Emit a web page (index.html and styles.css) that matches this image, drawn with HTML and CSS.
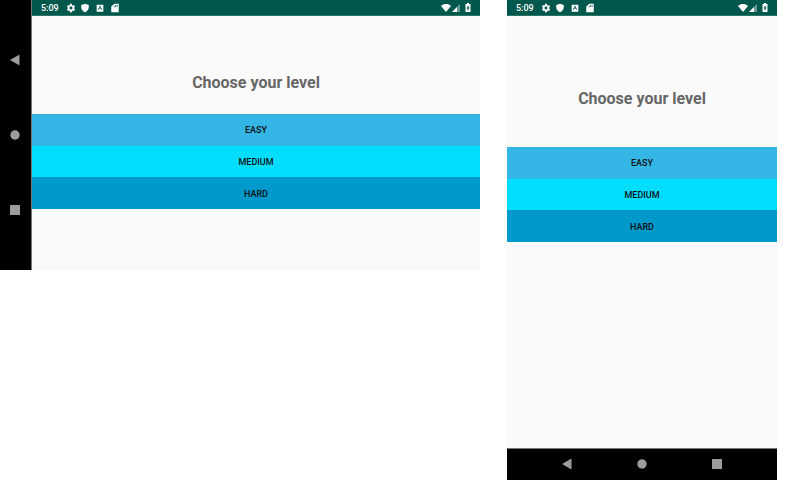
FILE: index.html
```html
<!DOCTYPE html>
<html lang="en">
<head>
<meta charset="utf-8">
<title>Choose your level</title>
<link rel="stylesheet" href="styles.css">
</head>
<body>
<svg class="sprite" aria-hidden="true">
  <symbol id="gear" viewBox="0 0 24 24"><path d="M19.4 13c0-.3.1-.6.1-1s0-.7-.1-1l2.1-1.600c.2-.2.2-.4.1-.6l-2-3.500c-.1-.2-.4-.3-.6-.2l-2.500 1c-.5-.4-1.100-.7-1.700-1l-.4-2.600c0-.3-.2-.5-.5-.5h-4c-.3 0-.5.2-.5.5L9.200 5.100c-.6.3-1.200.6-1.700 1L5 5.100c-.2-.1-.5 0-.6.2l-2 3.500c-.1.2-.1.4.1.6L4.600 11c0 .3-.1.7-.1 1s0 .7.1 1l-2.100 1.600c-.2.2-.2.4-.1.6l2 3.500c.1.2.4.3.6.2l2.500-1c.5.4 1.100.7 1.700 1l.4 2.600c0 .3.2.5.5.5h4c.3 0 .5-.2.5-.5l.4-2.600c.6-.3 1.200-.6 1.700-1l2.500 1c.2.1.5 0 .6-.2l2-3.500c.1-.2.1-.4-.1-.6zM12 15.500a3.500 3.500 0 1 1 0-7 3.500 3.500 0 0 1 0 7z"/></symbol>
  <symbol id="shield" viewBox="0 0 24 24"><path d="M12 2 3 5v6c0 5 4 9.700 9 11 5-1.300 9-6 9-11V5z"/></symbol>
  <symbol id="keyboard" viewBox="0 0 24 24"><path fill-rule="evenodd" d="M4 4h16v17H4zM11 7 7 16h2l1-2h4l1 2h2L13 7zM12 9l1.300 3.500h-2.600z"/></symbol>
  <symbol id="card" viewBox="0 0 24 24"><path fill-rule="evenodd" d="M21 2H10.500L3 8.500V22h18zM9 7h2v3H9zm3.500-2h2v4h-2zm3.500 0h2v4h-2z"/></symbol>
  <symbol id="wifi" viewBox="0 0 10 8"><path d="M0 2C3-.6 7-.6 10 2L5 8z"/></symbol>
  <symbol id="signal" viewBox="0 0 8 8"><path opacity=".4" d="M8 0v8H0z"/><path d="M5 3v5H0z"/></symbol>
  <symbol id="battery" viewBox="0 0 6 9"><path fill-rule="evenodd" d="M2 0h2v1h1.500v8h-5V1H2zM3.500 2 1.500 5.500h1.200V8l2-3.500H3.500z"/></symbol>
  <symbol id="back" viewBox="0 0 12 12"><path d="M1 6 10.500.5v11z"/></symbol>
  <symbol id="home" viewBox="0 0 12 12"><circle cx="6" cy="6" r="4.700"/></symbol>
  <symbol id="recent" viewBox="0 0 12 12"><rect x="1" y="1" width="10" height="10" rx=".5"/></symbol>
</svg>
<main class="devices">
  <section class="device landscape">
    <nav class="navbar">
      <button aria-label="Back"><svg><use href="#back"/></svg></button>
      <button aria-label="Home"><svg><use href="#home"/></svg></button>
      <button aria-label="Recent apps"><svg><use href="#recent"/></svg></button>
    </nav>
    <div class="screen">
      <header class="status">
        <span class="time">5:09</span>
        <div class="notices"><svg><use href="#gear"/></svg><svg><use href="#shield"/></svg><svg><use href="#keyboard"/></svg><svg><use href="#card"/></svg></div>
        <div class="system"><svg class="wifi"><use href="#wifi"/></svg><svg class="signal"><use href="#signal"/></svg><svg class="battery"><use href="#battery"/></svg></div>
      </header>
      <h1 class="title">Choose your level</h1>
      <div class="levels">
        <button class="level easy">EASY</button>
        <button class="level medium">MEDIUM</button>
        <button class="level hard">HARD</button>
      </div>
    </div>
  </section>
  <section class="device portrait">
    <div class="screen">
      <header class="status">
        <span class="time">5:09</span>
        <div class="notices"><svg><use href="#gear"/></svg><svg><use href="#shield"/></svg><svg><use href="#keyboard"/></svg><svg><use href="#card"/></svg></div>
        <div class="system"><svg class="wifi"><use href="#wifi"/></svg><svg class="signal"><use href="#signal"/></svg><svg class="battery"><use href="#battery"/></svg></div>
      </header>
      <h1 class="title">Choose your level</h1>
      <div class="levels">
        <button class="level easy">EASY</button>
        <button class="level medium">MEDIUM</button>
        <button class="level hard">HARD</button>
      </div>
    </div>
    <nav class="navbar">
      <button aria-label="Back"><svg><use href="#back"/></svg></button>
      <button aria-label="Home"><svg><use href="#home"/></svg></button>
      <button aria-label="Recent apps"><svg><use href="#recent"/></svg></button>
    </nav>
  </section>
</main>
</body>
</html>
```

FILE: styles.css
```css
* {
  box-sizing: border-box;
}

body {
  margin: 0;
  background: #fff;
  font-family: Roboto, "Liberation Sans", sans-serif;
}

button {
  border: 0;
  padding: 0;
  font: inherit;
}

svg {
  display: block;
  fill: currentColor;
}

.sprite {
  display: none;
}

.devices {
  display: grid;
  grid-template-columns: 16fr 9fr;
  align-items: start;
  gap: 27px;
  padding-right: 34px;
}

.device {
  display: flex;
  background: #fafafa;
}

.landscape {
  aspect-ratio: 16 / 9;
}

.portrait {
  flex-direction: column;
  aspect-ratio: 9 / 16;
}

.screen {
  flex: 1;
  display: flex;
  flex-direction: column;
}

.status {
  display: flex;
  align-items: center;
  height: 16px;
  padding: 0 9px;
  background: #00574b;
  border-bottom: 1px solid #2b7468;
  color: #fff;
}

.time {
  font-size: 9px;
  font-weight: 500;
  line-height: 16px;
}

.notices {
  display: flex;
  justify-content: space-between;
  width: 54px;
  margin-left: 7px;
}

.notices svg {
  width: 10px;
  height: 10px;
}

.system {
  display: flex;
  align-items: center;
  gap: 1px;
  margin-left: auto;
}

.wifi {
  width: 10px;
  height: 8px;
}

.signal {
  width: 8px;
  height: 8px;
}

.battery {
  width: 6px;
  height: 9px;
  margin-left: 4px;
}

.title {
  margin: 0;
  color: #666;
  font-size: 16px;
  font-weight: 700;
  line-height: 24px;
  text-align: center;
}

.landscape .title {
  padding: 55px 0 19px;
}

.portrait .title {
  padding: 71px 0 36px;
}

.levels {
  display: grid;
  grid-template-rows: repeat(3, 1fr);
  height: 95px;
}

.level {
  padding-top: 1px;
  color: #111;
  font-size: 9px;
  font-weight: 500;
}

.easy {
  background: #33b5e5;
}

.medium {
  background: #00ddff;
}

.hard {
  background: #0099cc;
}

.navbar {
  display: flex;
  justify-content: center;
  background: #000;
  color: #9c9c9c;
}

.navbar button {
  display: flex;
  align-items: center;
  justify-content: center;
  background: none;
  color: inherit;
}

.navbar svg {
  width: 12px;
  height: 12px;
}

.landscape .navbar {
  flex-direction: column;
  width: 32px;
  padding-right: 1px;
  border-right: 1px solid #777;
}

.landscape .navbar button {
  height: 75px;
}

.portrait .navbar {
  height: 32px;
  padding-bottom: 1px;
  border-top: 1px solid #777;
}

.portrait .navbar button {
  width: 75px;
}
```
